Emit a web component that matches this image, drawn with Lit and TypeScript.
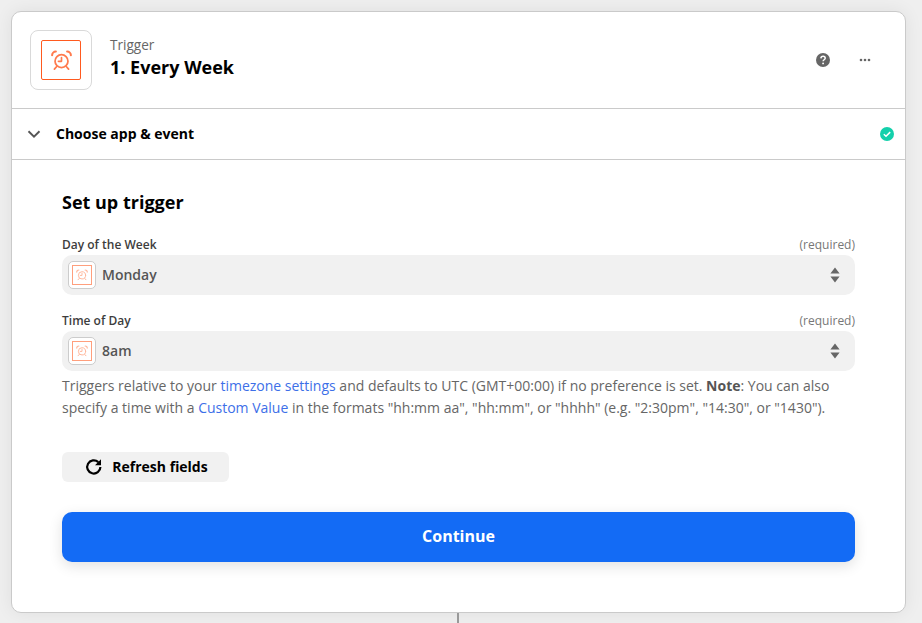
import { LitElement, html, css, svg } from "lit";
import { customElement } from "lit/decorators.js";

const alarm = svg`<g fill="none" stroke="currentColor" stroke-linecap="round">
  <circle cx="12" cy="12.6" r="6.2" stroke-width="1.7"/>
  <path d="M12 9.2v3.6H9" stroke-width="1.6" stroke-linejoin="round"/>
  <path d="M3 7C3 5 4.6 3.4 6.6 3.4M21 7C21 5 19.4 3.4 17.4 3.4" stroke-width="2"/>
  <path d="M7.2 18l-2 2.2M16.8 18l2 2.2" stroke-width="1.7"/>
</g>`;

@customElement("app-root")
export class AppRoot extends LitElement {
  static styles = css`
    :host {
      display: block;
      width: 922px;
      height: 623px;
      overflow: hidden;
      box-sizing: border-box;
      padding: 11px 16px 0 11px;
      background: #efefef;
      font-family: "Open Sans", "Liberation Sans", sans-serif;
      color: #000;
    }
    .card {
      box-sizing: border-box;
      width: 895px;
      height: 602px;
      background: #fff;
      border: 1px solid #cacaca;
      border-radius: 10px;
      box-shadow: 0 0 18px rgba(0, 0, 0, 0.07);
      display: flex;
      flex-direction: column;
    }
    .connector {
      width: 2px;
      height: 11px;
      background: #999;
      margin-left: 446px;
    }
    .header {
      box-sizing: border-box;
      height: 97px;
      border-bottom: 1px solid #cacaca;
      display: flex;
      align-items: center;
      padding: 0 18px 0 18px;
      flex: none;
    }
    .logo {
      box-sizing: border-box;
      width: 62px;
      height: 60px;
      border: 1px solid #d9d9d9;
      border-radius: 8px;
      display: flex;
      align-items: center;
      justify-content: center;
      margin-right: 18px;
    }
    .logo-in {
      box-sizing: border-box;
      width: 40px;
      height: 40px;
      border: 1.5px solid #ff5a1f;
      border-radius: 2px;
      color: #ff7a4d;
      display: flex;
      align-items: center;
      justify-content: center;
    }
    .logo-in svg { width: 25px; height: 25px; }
    .titles { flex: 1; display: flex; flex-direction: column; margin-top: -4px; }
    .kicker { font-size: 13.6px; line-height: 18px; color: #666; }
    .name { font-size: 18px; line-height: 26px; font-weight: 700; color: #000; }
    .actions { display: flex; align-items: center; gap: 29px; margin-right: 16px; }
    .actions svg { display: block; }
    .step {
      box-sizing: border-box;
      height: 51px;
      border-bottom: 1px solid #cacaca;
      display: flex;
      align-items: center;
      padding: 0 11px 0 15px;
      flex: none;
    }
    .step .chev { margin-right: 15px; display: block; }
    .step .label { flex: 1; font-size: 14px; line-height: 18px; font-weight: 700; color: #000; }
    .body {
      flex: 1;
      padding: 29px 50px 0 50px;
      display: flex;
      flex-direction: column;
    }
    h2 {
      margin: 0 0 20px;
      font-size: 18px;
      line-height: 26px;
      font-weight: 700;
      color: #000;
    }
    .field-top {
      display: flex;
      justify-content: space-between;
      align-items: center;
      height: 20px;
      line-height: 16px;
    }
    .field-top .lbl { font-size: 12px; font-weight: 600; color: #3d3d3d; }
    .field-top .req { font-size: 12px; color: #777; }
    .select {
      box-sizing: border-box;
      height: 40px;
      border-radius: 10px;
      background: #f1f1f1;
      display: flex;
      align-items: center;
      padding: 0 14px 0 6px;
      margin-bottom: 16px;
    }
    .select.last { margin-bottom: 4px; }
    .mini {
      box-sizing: border-box;
      width: 28px;
      height: 28px;
      border: 1px solid #ccc;
      border-radius: 5px;
      background: #fff;
      display: flex;
      align-items: center;
      justify-content: center;
      margin-right: 6px;
    }
    .mini-in {
      box-sizing: border-box;
      width: 20px;
      height: 20px;
      border: 1px solid #ff9f7d;
      color: #ffb79c;
      display: flex;
      align-items: center;
      justify-content: center;
    }
    .mini-in svg { width: 14px; height: 14px; }
    .value { flex: 1; font-size: 14px; font-weight: 600; color: #555; line-height: 18px; margin-top: -1px; }
    .note {
      font-size: 14px;
      line-height: 22px;
      color: #666;
    }
    .note div { white-space: nowrap; }
    .note a { color: #3d6fe8; text-decoration: none; }
    .note b { font-weight: 700; color: #555; }
    .refresh {
      box-sizing: border-box;
      margin-top: 33px;
      width: 167px;
      height: 30px;
      padding-left: 1px;
      border-radius: 6px;
      background: #f1f1f1;
      display: flex;
      align-items: center;
      justify-content: center;
      gap: 8px;
      font-size: 14px;
      line-height: 18px;
      font-weight: 700;
      color: #000;
    }
    .refresh svg { display: block; }
    .continue {
      box-sizing: border-box;
      margin-top: 30px;
      height: 50px;
      padding-bottom: 2px;
      border-radius: 10px;
      background: #136bf5;
      color: #fff;
      display: flex;
      align-items: center;
      justify-content: center;
      font-size: 16px;
      line-height: 22px;
      font-weight: 700;
      box-shadow: 0 4px 14px rgba(0, 0, 0, 0.12);
    }
  `;

  private field(label: string, value: string, last = false) {
    return html`
      <div class="field-top"><span class="lbl">${label}</span><span class="req">(required)</span></div>
      <div class="select ${last ? "last" : ""}">
        <div class="mini"><div class="mini-in"><svg viewBox="0 0 24 24">${alarm}</svg></div></div>
        <span class="value">${value}</span>
        <svg width="12" height="18" viewBox="0 0 12 18"><path fill="#666" d="M6 1.5l4.6 6H1.4zM6 16.5l-4.6-6h9.2z"/></svg>
      </div>
    `;
  }

  render() {
    return html`
      <div class="card">
        <div class="header">
          <div class="logo"><div class="logo-in"><svg viewBox="0 0 24 24">${alarm}</svg></div></div>
          <div class="titles">
            <div class="kicker">Trigger</div>
            <div class="name">1. Every Week</div>
          </div>
          <div class="actions">
            <svg width="14" height="14" viewBox="0 0 14 14">
              <circle cx="7" cy="7" r="7" fill="#666"/>
              <path d="M4.9 5.4C5 4 6 3.3 7.1 3.3c1.2 0 2.1.8 2.1 1.9 0 1.5-2.1 1.6-2.1 3.1" fill="none" stroke="#fff" stroke-width="1.5"/>
              <circle cx="7.1" cy="10.4" r="0.95" fill="#fff"/>
            </svg>
            <svg width="12" height="4" viewBox="0 0 12 4">
              <circle cx="2" cy="2" r="1.3" fill="#666"/><circle cx="6" cy="2" r="1.3" fill="#666"/><circle cx="10" cy="2" r="1.3" fill="#666"/>
            </svg>
          </div>
        </div>
        <div class="step">
          <svg class="chev" width="14" height="14" viewBox="0 0 14 14"><path d="M1.5 4.2L7 9.6l5.5-5.4" fill="none" stroke="#555" stroke-width="1.9"/></svg>
          <span class="label">Choose app &amp; event</span>
          <svg width="14" height="14" viewBox="0 0 14 14">
            <circle cx="7" cy="7" r="7" fill="#13d0ab"/>
            <path d="M3.8 7.3l2.2 2 4.2-4.2" fill="none" stroke="#fff" stroke-width="1.5"/>
          </svg>
        </div>
        <div class="body">
          <h2>Set up trigger</h2>
          ${this.field("Day of the Week", "Monday")}
          ${this.field("Time of Day", "8am", true)}
          <div class="note">
            <div>Triggers relative to your <a>timezone settings</a> and defaults to UTC (GMT+00:00) if no preference is set. <b>Note</b>: You can also</div>
            <div>specify a time with a <a>Custom Value</a> in the formats "hh:mm aa", "hh:mm", or "hhhh" (e.g. "2:30pm", "14:30", or "1430").</div>
          </div>
          <div class="refresh">
            <svg width="20" height="20" viewBox="0 0 20 20"><path d="M16.4 10a6.6 6.6 0 1 1-2.1-4.9" fill="none" stroke="#000" stroke-width="2.2"/><path fill="#000" d="M17 2.2v6h-6z"/></svg>
            <span>Refresh fields</span>
          </div>
          <div class="continue">Continue</div>
        </div>
      </div>
      <div class="connector"></div>
    `;
  }
}
